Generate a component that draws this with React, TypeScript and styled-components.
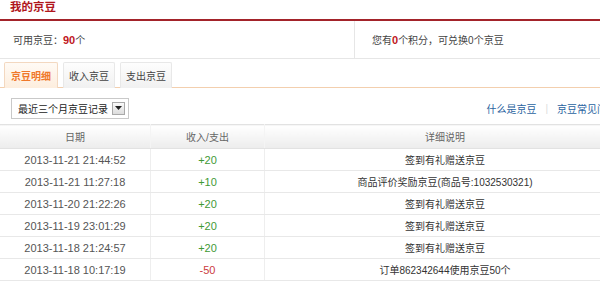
import React from 'react';
import styled, { createGlobalStyle } from 'styled-components';

const records = [
    { date: '2013-11-21 21:44:52', amount: '+20', note: '签到有礼赠送京豆' },
    { date: '2013-11-21 11:27:18', amount: '+10', note: '商品评价奖励京豆(商品号:1032530321)' },
    { date: '2013-11-20 21:22:26', amount: '+20', note: '签到有礼赠送京豆' },
    { date: '2013-11-19 23:01:29', amount: '+20', note: '签到有礼赠送京豆' },
    { date: '2013-11-18 21:24:57', amount: '+20', note: '签到有礼赠送京豆' },
    { date: '2013-11-18 10:17:19', amount: '-50', note: '订单862342644使用京豆50个' },
];

const tabs = ['京豆明细', '收入京豆', '支出京豆'];

const GlobalStyle = createGlobalStyle`
    html, body {
        margin: 0;
        padding: 0;
        background: #fff;
        overflow: hidden;
    }
    body {
        font-family: "Liberation Sans", "Noto Sans CJK SC", sans-serif;
        font-size: 10px;
        color: #333;
    }
`;

const App = () => {
    return (
        <>
            <GlobalStyle />
            <PageStyled>
                <TitleBar>我的京豆</TitleBar>
                <InfoRow>
                    <InfoCell width={355}>
                        可用京豆：<Strong>90</Strong>个
                    </InfoCell>
                    <InfoCell>
                        您有<Strong>0</Strong>个积分，可兑换0个京豆
                    </InfoCell>
                </InfoRow>
                <TabBar>
                    {tabs.map((t, i) => (
                        <Tab key={t} active={i === 0}>
                            {t}
                        </Tab>
                    ))}
                </TabBar>
                <FilterRow>
                    <SelectBox>
                        最近三个月京豆记录
                        <SelectArrow>
                            <svg width="7" height="4" viewBox="0 0 7 4">
                                <path d="M0 0 L7 0 L3.5 4 Z" fill="#222" />
                            </svg>
                        </SelectArrow>
                    </SelectBox>
                    <Links>
                        <LinkText>什么是京豆</LinkText>
                        <Sep>|</Sep>
                        <LinkText>京豆常见问题</LinkText>
                    </Links>
                </FilterRow>
                <Table>
                    <thead>
                        <tr>
                            <Th width={150}>日期</Th>
                            <Th width={113}>收入/支出</Th>
                            <Th>详细说明</Th>
                        </tr>
                    </thead>
                    <tbody>
                        {records.map((r) => (
                            <tr key={r.date}>
                                <DateTd>{r.date}</DateTd>
                                <AmountTd negative={r.amount.startsWith('-')}>{r.amount}</AmountTd>
                                <Td>{r.note}</Td>
                            </tr>
                        ))}
                    </tbody>
                </Table>
            </PageStyled>
        </>
    );
};

const PageStyled = styled.div`
    width: 625px;
    display: flex;
    flex-direction: column;
`;

const TitleBar = styled.div`
    height: 19px;
    padding-left: 10px;
    font-size: 11.5px;
    font-weight: bold;
    line-height: 15px;
    color: #b0151b;
    border-bottom: 2px solid #a3232a;
    width: 590px;
`;

const InfoRow = styled.div`
    display: flex;
    height: 37px;
    border-bottom: 1px solid #e6e6e6;
`;

const InfoCell = styled.div<{ width?: number }>`
    display: flex;
    align-items: center;
    padding-left: ${(p) => (p.width ? 13 : 17)}px;
    width: ${(p) => (p.width ? `${p.width}px` : 'auto')};
    box-sizing: border-box;
    flex: ${(p) => (p.width ? 'none' : 1)};
    border-right: ${(p) => (p.width ? '1px solid #e6e6e6' : 'none')};
    color: #444;
`;

const Strong = styled.b`
    color: #c0161d;
    font-size: 11px;
`;

const TabBar = styled.div`
    display: flex;
    gap: 5px;
    margin-top: 3px;
    padding-left: 4px;
    height: 25px;
    border-bottom: 1px solid #f3cfae;
`;

const Tab = styled.div<{ active?: boolean }>`
    display: flex;
    align-items: center;
    padding: 0 ${(p) => (p.active ? 6 : 5)}px;
    margin-bottom: -1px;
    border: 1px solid ${(p) => (p.active ? '#f3d8c0' : '#e8e8e8')};
    border-bottom: none;
    border-radius: 2px 2px 0 0;
    background: ${(p) =>
        p.active ? 'linear-gradient(#fffaf5, #fdeede)' : 'linear-gradient(#fdfdfd, #f1f1f1)'};
    color: ${(p) => (p.active ? '#f0782a' : '#444')};
    font-weight: ${(p) => (p.active ? 'bold' : 'normal')};
`;

const FilterRow = styled.div`
    display: flex;
    align-items: center;
    justify-content: space-between;
    height: 22px;
    margin-top: 9px;
    padding: 0 8px 0 11px;
`;

const SelectBox = styled.div`
    display: flex;
    align-items: center;
    gap: 4px;
    height: 21px;
    box-sizing: border-box;
    padding: 0 3px 0 6px;
    border: 1px solid #c9c9c9;
    color: #222;
`;

const SelectArrow = styled.span`
    display: flex;
    align-items: center;
    justify-content: center;
    width: 11px;
    height: 11px;
    border: 1px solid #a9a9a9;
    background: linear-gradient(#fafafa, #dcdcdc);
`;

const Links = styled.div`
    display: flex;
    align-items: center;
    gap: 9px;
`;

const LinkText = styled.span`
    color: #2a63a0;
`;

const Sep = styled.span`
    color: #ddd;
`;

const Table = styled.table`
    margin-top: 5px;
    width: 100%;
    border-collapse: collapse;
    table-layout: fixed;
    border-top: 1px solid #e2e2e2;
`;

const Th = styled.th<{ width?: number }>`
    width: ${(p) => (p.width ? `${p.width}px` : 'auto')};
    height: 23px;
    padding: 0;
    font-weight: normal;
    color: #666;
    background: linear-gradient(#ffffff, #ececec);
    border-left: 1px solid #f4f4f4;
    border-bottom: 1px solid #e2e2e2;
    &:first-child {
        border-left: none;
    }
`;

const Td = styled.td`
    height: 21px;
    padding: 0;
    text-align: center;
    color: #333;
    border-left: 1px solid #eeeeee;
    border-bottom: 1px solid #e8e8e8;
`;

const DateTd = styled(Td)`
    border-left: none;
    font-size: 11px;
    color: #555;
`;

const AmountTd = styled(Td)<{ negative?: boolean }>`
    font-size: 11px;
    color: ${(p) => (p.negative ? '#cc3b40' : '#3f9a35')};
`;

export default App;
